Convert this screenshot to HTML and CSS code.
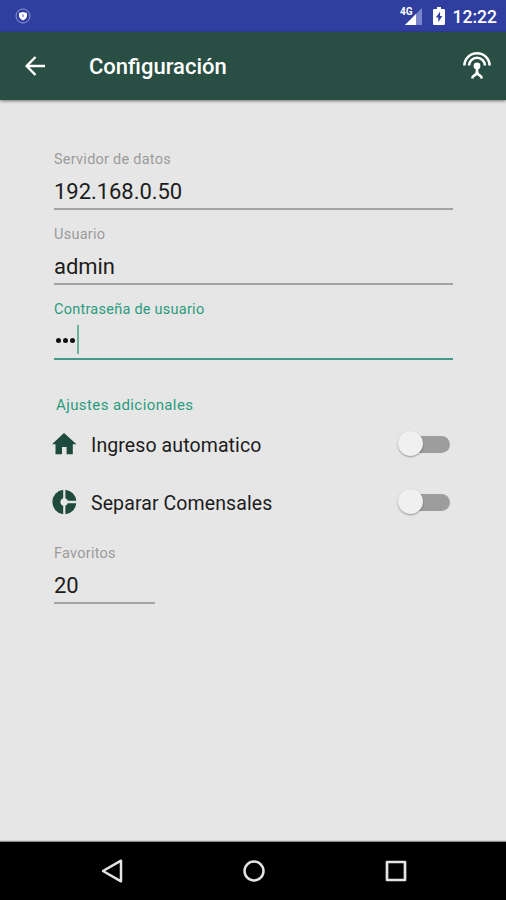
FILE: index.html
```
<!DOCTYPE html>
<html lang="es">
<head>
<meta charset="UTF-8">
<title>Configuración</title>
<link rel="stylesheet" href="styles.css">
</head>
<body>
<div class="status-bar">
  <svg class="shield" width="16" height="16" viewBox="0 0 16 16">
    <circle cx="8" cy="8" r="7" fill="none" stroke="#8f99d6" stroke-width="1"/>
    <path d="M4 5 8 4l4 1v2.800c0 2.200-1.700 3.700-4 4.700-2.300-1-4-2.500-4-4.700z" fill="#fff"/>
    <path d="M7.200 6.200h1.600v2L8 9.200l-.800-1z" fill="#8f99d6"/>
  </svg>
  <div class="status-icons">
    <span class="network">4G</span>
    <svg class="signal" width="17" height="17" viewBox="0 0 17 17">
      <path d="M17 0v17H0z" fill="#7b85c9"/>
      <path d="M11 6v11H0z" fill="#fff"/>
    </svg>
    <svg class="battery" width="12" height="18" viewBox="0 0 12 19" preserveAspectRatio="none">
      <path d="M4 0h4v2h2.700q1.300 0 1.300 1.300v14.400q0 1.300-1.300 1.300H1.300Q0 19 0 17.700V3.300Q0 2 1.300 2H4z" fill="#fff"/>
      <path d="M7 5 2.800 11.200h2.500V16l4-6.400H7z" fill="#303f9f"/>
    </svg>
    <span class="clock">12:22</span>
  </div>
</div>

<header class="app-bar">
  <svg class="back" width="20" height="20" viewBox="0 0 20 20" fill="none" stroke="#fff" stroke-width="2.500">
    <path d="M20 10H2M10.500 1 1.700 10l8.800 9"/>
  </svg>
  <h1 class="title">Configuración</h1>
  <svg class="antenna" width="28" height="28" viewBox="0 0 28 28" fill="none" stroke="#fff" stroke-width="2.600">
    <path d="M1.400 13.600a12.600 12.300 0 0 1 25.200 0"/>
    <path d="M6 13.600a8 7.800 0 0 1 16 0"/>
    <circle cx="14" cy="14" r="3.400" fill="#fff" stroke="none"/>
    <path d="M14 14v7"/>
    <path d="M9.200 26.500c.200-1.600.900-2.600 2.300-3.200 1.300-.600 2-1.300 2.500-2.800.500 1.500 1.200 2.200 2.500 2.800 1.400.600 2.100 1.600 2.300 3.200"/>
  </svg>
</header>

<main class="settings">
  <div class="field">
    <div class="label">Servidor de datos</div>
    <div class="value">192.168.0.50</div>
  </div>
  <div class="field">
    <div class="label">Usuario</div>
    <div class="value">admin</div>
  </div>
  <div class="field focused">
    <div class="label">Contraseña de usuario</div>
    <div class="value password"><i class="dot"></i><i class="dot"></i><i class="dot"></i><span class="caret"></span></div>
  </div>

  <h2 class="section-title">Ajustes adicionales</h2>
  <div class="option">
    <svg class="option-icon" width="26" height="26" viewBox="0 0 26 26" fill="#1f4a3e">
      <path d="M13 2 25.500 13.300h-3.700v10h-6.200v-7.300h-4.600v7.300H4.500v-10H1L13 2z"/>
    </svg>
    <span class="option-text">Ingreso automatico</span>
    <span class="switch"></span>
  </div>
  <div class="option">
    <svg class="option-icon" width="26" height="26" viewBox="0 0 26 26" fill="#1f4a3e">
      <path d="M12.200.700v8.500a4 4 0 0 0 0 7.600v8.500a12.400 12.400 0 0 1 0-24.600z"/>
      <path d="M14.400.700a12.400 12.400 0 0 1 10.900 11.100h-8.500a4 4 0 0 0-2.400-2.600z"/>
      <path d="M25.300 14.200a12.400 12.400 0 0 1-10.900 11.100v-8.500a4 4 0 0 0 2.400-2.600z"/>
    </svg>
    <span class="option-text">Separar Comensales</span>
    <span class="switch"></span>
  </div>

  <div class="field favorites">
    <div class="label">Favoritos</div>
    <div class="value">20</div>
  </div>
</main>

<nav class="nav-bar">
  <svg width="22" height="24" viewBox="0 0 22 24" fill="none" stroke="#e4e4e4" stroke-width="2.500" stroke-linejoin="round">
    <path d="M20 1.700v20.600L2 12z"/>
  </svg>
  <svg width="22" height="22" viewBox="0 0 22 22" fill="none" stroke="#e4e4e4" stroke-width="2.500">
    <circle cx="11" cy="11" r="9.500"/>
  </svg>
  <svg width="22" height="22" viewBox="0 0 22 22" fill="none" stroke="#e4e4e4" stroke-width="2.700" stroke-linejoin="round">
    <path d="M2 2h18v18H2z"/>
  </svg>
</nav>
</body>
</html>
```
FILE: styles.css
```
:root {
  --status: #303f9f;
  --primary: #294e43;
  --accent: #2a9c7d;
  --accent-line: #45998a;
  --background: #e6e6e6;
  --text: #1c1c1c;
  --hint: #9b9b9b;
}

* {
  box-sizing: border-box;
  margin: 0;
  padding: 0;
}

body {
  width: 506px;
  height: 900px;
  display: flex;
  flex-direction: column;
  overflow: hidden;
  font-family: Roboto, sans-serif;
  background: var(--background);
  color: var(--text);
}

svg {
  display: block;
  flex: none;
}

.status-bar {
  height: 32px;
  flex: none;
  display: flex;
  align-items: center;
  justify-content: space-between;
  padding: 0 9px 0 15px;
  background: var(--status);
  color: #fff;
}

.status-icons {
  display: flex;
  align-items: center;
}

.network {
  align-self: flex-start;
  margin-right: -8px;
  padding-top: 1px;
  font-size: 10px;
  font-weight: 700;
  line-height: 10px;
  z-index: 1;
}

.battery {
  margin: 0 8px 0 11px;
}

.clock {
  font-size: 17.5px;
  font-weight: 500;
  line-height: 20px;
  padding-top: 1px;
}

.app-bar {
  height: 68px;
  flex: none;
  display: flex;
  align-items: center;
  padding: 0 15px 0 25px;
  background: var(--primary);
  color: #fff;
  box-shadow: 0 1px 3px rgba(0, 0, 0, 0.5);
}

.title {
  flex: 1;
  margin-left: 44px;
  padding-top: 2px;
  font-size: 22px;
  font-weight: 500;
  line-height: 28px;
}

.settings {
  flex: 1;
  padding: 49px 53px 0 54px;
}

.field {
  height: 75px;
}

.label {
  height: 20px;
  font-size: 14.5px;
  line-height: 22px;
  letter-spacing: 0.25px;
  color: var(--hint);
}

.value {
  height: 41px;
  padding-top: 9px;
  font-size: 22px;
  line-height: 28px;
  letter-spacing: -0.05px;
  border-bottom: 2px solid #a3a3a3;
}

.focused .label,
.section-title {
  color: var(--accent);
}

.password {
  display: flex;
  gap: 2px;
  align-items: center;
  padding: 2px 0 0 2px;
  border-color: var(--accent-line);
}

.dot {
  width: 5px;
  height: 5px;
  margin-top: 1px;
  border-radius: 50%;
  background: #111;
}

.caret {
  width: 2px;
  height: 29px;
  background: #65b5a0;
}

.section-title {
  height: 20px;
  margin: 21px 0 0 2px;
  font-size: 15px;
  font-weight: 400;
  line-height: 20px;
  letter-spacing: 0.4px;
}

.option {
  height: 58px;
  display: flex;
  align-items: center;
  margin-left: -3px;
}

.option-text {
  flex: 1;
  margin-left: 14px;
  padding-top: 4px;
  font-size: 19.5px;
  line-height: 26px;
  letter-spacing: 0.1px;
}

.switch {
  position: relative;
  width: 46px;
  height: 17px;
  margin-right: 3px;
  border-radius: 9px;
  background: #9d9d9d;
}

.switch::before {
  content: "";
  position: absolute;
  left: -6px;
  top: -5px;
  width: 25px;
  height: 25px;
  border-radius: 50%;
  background: #f0f0f0;
  box-shadow: 0 1px 2px rgba(0, 0, 0, 0.35);
}

.favorites {
  width: 101px;
  margin-top: 12px;
}

.nav-bar {
  height: 58px;
  flex: none;
  display: flex;
  align-items: center;
  justify-content: space-between;
  padding: 0 99px 0 101px;
  background: #000;
  box-shadow: 0 -1px 1px rgba(0, 0, 0, 0.4);
}
```
